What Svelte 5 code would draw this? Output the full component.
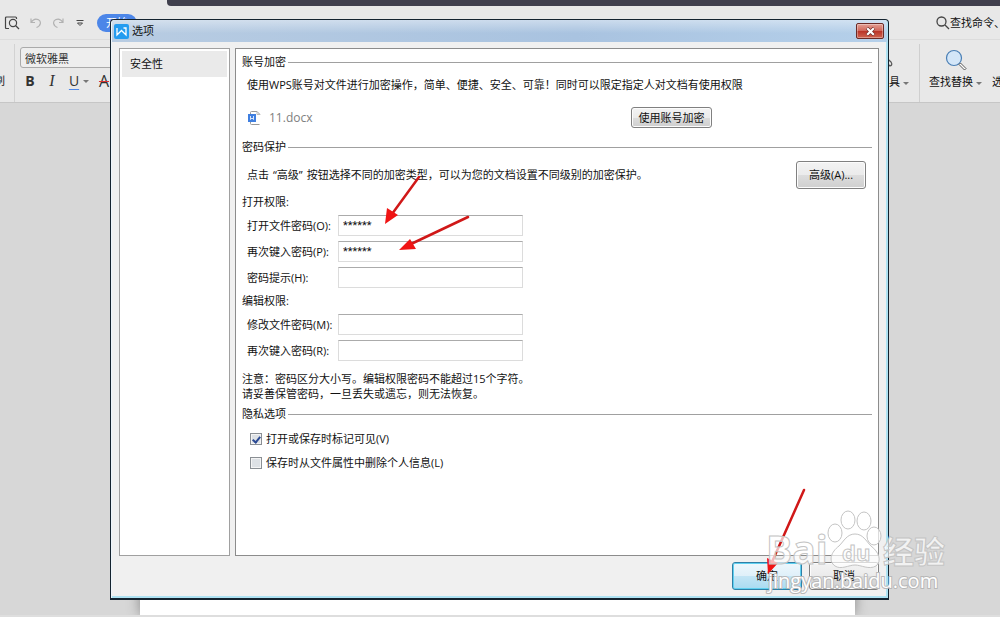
<script>
    let openFields = $state([
        { id: 'open-pwd', label: '打开文件密码(O):', value: '******' },
        { id: 'open-again', label: '再次键入密码(P):', value: '******' },
        { id: 'hint', label: '密码提示(H):', value: '' }
    ])
    let editFields = $state([
        { id: 'edit-pwd', label: '修改文件密码(M):', value: '' },
        { id: 'edit-again', label: '再次键入密码(R):', value: '' }
    ])
    let showMarkup = $state(true)
    let removeInfo = $state(false)
</script>

{#snippet fields(list)}
    <div class="fields">
        {#each list as field}
            <div class="field">
                <label for={field.id}>{field.label}</label>
                <input id={field.id} type="text" autocomplete="off" bind:value={field.value} />
            </div>
        {/each}
    </div>
{/snippet}

<div class="desktop">
    <div class="titlestrip"></div>
    <header class="tabs">
        <svg width="16" height="16" viewBox="0 0 16 16" fill="none" stroke="#444" stroke-width="1.2">
            <path d="M5 13.500H2.500Q1.500 13.500 1.500 12.500V3Q1.500 2 2.500 2H11.500Q12.500 2 12.500 3V4" />
            <circle cx="9" cy="8" r="3.600" />
            <path d="M11.500 10.500L15 14" />
        </svg>
        <svg width="12" height="12" viewBox="0 0 12 12" fill="none" stroke="#b2b2b2" stroke-width="1.200">
            <path d="M1 1.500V5.500H5M1.200 5.300C3 2.500 6 1.500 8.500 2.800C11.500 4.500 11 9 6.500 10.500" />
        </svg>
        <svg width="12" height="12" viewBox="0 0 12 12" fill="none" stroke="#b2b2b2" stroke-width="1.200">
            <path d="M11 1.500V5.500H7M10.800 5.300C9 2.500 6 1.500 3.500 2.800C.5 4.500 1 9 5.500 10.500" />
        </svg>
        <svg class="more" width="8" height="8" viewBox="0 0 8 8" fill="none" stroke="#444">
            <path d="M.5 1.500H7.500M1.500 4H6.500L4 6.500Z" />
        </svg>
        <button class="start">开始</button>
        <div class="search">
            <svg width="14" height="14" viewBox="0 0 14 14" fill="none" stroke="#444" stroke-width="1.300">
                <circle cx="5.500" cy="5.500" r="4.500" />
                <path d="M9 9L13 13" />
            </svg>
            <span>查找命令、搜索模板</span>
        </div>
    </header>
    <div class="ribbon">
        <div class="brush">刷</div>
        <div class="fontgroup">
            <input class="fontname" type="text" aria-label="字体" value="微软雅黑" />
            <div class="format">
                <button class="bold">B</button>
                <button class="italic">I</button>
                <button class="under">U</button>
                <i class="caret"></i>
                <button class="strike">A</button>
            </div>
        </div>
        <div class="tools">
            <div class="tool">
                <svg width="24" height="24" viewBox="0 0 24 24" fill="none" stroke="#555" stroke-width="1.200">
                    <path d="M9 4L20 14Q22 17 19 18L8 8" />
                </svg>
                <button>文字工具<i class="caret"></i></button>
            </div>
            <div class="tool find">
                <svg width="24" height="24" viewBox="0 0 24 24" fill="none">
                    <circle cx="10" cy="10" r="7.500" fill="#d3e6f8" stroke="#4a7fb5" stroke-width="1.200" />
                    <path d="M15 16.500L16.500 15L22 20.500L20.500 22Z" fill="#fff" stroke="#555" />
                </svg>
                <button>查找替换<i class="caret"></i></button>
            </div>
            <div class="tool"><button>选择</button></div>
        </div>
    </div>
    <div class="canvas"><div class="page"></div></div>
    <div class="status"></div>

    <section class="dialog" aria-label="选项">
        <div class="caption">
            <svg width="15" height="15" viewBox="0 0 15 15">
                <rect width="15" height="15" rx="2" fill="#259cf0" />
                <path d="M3 4V11L7.500 6.500L12 11V4H9.500" fill="none" stroke="#fff" stroke-width="1.300" />
            </svg>
            <span>选项</span>
            <button class="close" aria-label="关闭">
                <svg width="11" height="9" viewBox="0 0 11 9">
                    <path d="M2 1L9 8M9 1L2 8" stroke="#6b2a26" stroke-width="3.400" />
                    <path d="M2.200 1.200L8.800 7.800M8.800 1.200L2.200 7.800" stroke="#fff" stroke-width="2.200" />
                </svg>
            </button>
        </div>
        <div class="body">
            <nav class="side"><a href="#security">安全性</a></nav>
            <div class="panel" id="security">
                <h2>账号加密</h2>
                <p class="account">使用WPS账号对文件进行加密操作，简单、便捷、安全、可靠！同时可以限定指定人对文档有使用权限</p>
                <div class="file">
                    <svg width="14" height="14" viewBox="0 0 14 14">
                        <path d="M2.500 3V1.500Q2.500 .5 3.500 .5H9L12 3.500M2.500 11V12.500Q2.500 13.500 3.500 13.500H11.500" fill="none" stroke="#999" />
                        <path d="M9 .5V3.500H12" fill="none" stroke="#bbb" />
                        <rect y="3" width="8" height="8" fill="#3f7fe0" />
                        <path d="M2.500 5V8.500L4 7L5.500 8.500V5" fill="none" stroke="#fff" stroke-width=".8" />
                    </svg>
                    <span>11.docx</span>
                    <button class="btn small">使用账号加密</button>
                </div>
                <h2>密码保护</h2>
                <div class="protect">
                    <p>点击<span class="quote">“高级”</span>按钮选择不同的加密类型，可以为您的文档设置不同级别的加密保护。</p>
                    <button class="btn">高级(A)...</button>
                </div>
                <h3>打开权限:</h3>
                {@render fields(openFields)}
                <h3>编辑权限:</h3>
                {@render fields(editFields)}
                <p class="note">注意：密码区分大小写。编辑权限密码不能超过15个字符。<br />请妥善保管密码，一旦丢失或遗忘，则无法恢复。</p>
                <h2>隐私选项</h2>
                <div class="checks">
                    <label><input type="checkbox" bind:checked={showMarkup} />打开或保存时标记可见(V)</label>
                    <label><input type="checkbox" bind:checked={removeInfo} />保存时从文件属性中删除个人信息(L)</label>
                </div>
            </div>
        </div>
        <footer>
            <button class="btn ok">确定</button>
            <button class="btn">取消</button>
        </footer>
    </section>

    <!-- arrows and watermark drawn over the windows -->
    <svg class="marks" width="1000" height="617" viewBox="0 0 1000 617" aria-hidden="true">
        <g stroke="#d01818" stroke-width="2.500" fill="#f01414">
            <path d="M419 177L392 214M468 217L411 244M804 490L772 562" stroke-linecap="round" />
            <path stroke="none" d="M385 224L387 208L398 215ZM399 250L410 239L416 249ZM768 574L767 558L778 563Z" />
        </g>
        <g class="water">
            <text x="766" y="564" font-size="39" font-weight="700">Bai</text>
            <path d="M855 534C847 534 844 541 839 546C831 552 828 561 835 566C841 570 849 565 855 565C861 565 869 570 876 566C882 561 879 552 871 546C866 541 863 534 855 534Z" />
            <ellipse cx="835" cy="533" rx="7" ry="9" />
            <ellipse cx="848" cy="520" rx="7" ry="9" />
            <ellipse cx="864" cy="521" rx="7" ry="9" />
            <ellipse cx="874" cy="536" rx="7" ry="9" />
            <text x="842" y="561" font-size="22" font-weight="700">du</text>
            <text x="883" y="563" font-size="31" font-weight="700">经验</text>
            <text class="url" x="768" y="588" font-size="20">jingyan.baidu.com</text>
        </g>
    </svg>
</div>

<style>
    :global(body) {
        background: #d7d7d7;
    }
    .desktop {
        position: relative;
        display: flex;
        flex-direction: column;
        min-height: 100vh;
        overflow: hidden;
        background: #e8e8e8;
        font: 11px/16px "Open Sans", "Noto Sans CJK SC", sans-serif;
        color: #111;
    }
    button, input {
        font: inherit;
        color: inherit;
        margin: 0;
        padding: 0;
        box-sizing: border-box;
    }
    button {
        border: 0;
        background: none;
        white-space: nowrap;
    }
    h2, h3, p {
        margin: 0;
        font-size: 11px;
        font-weight: 400;
    }
    .titlestrip {
        height: 6px;
        margin-left: 167px;
        border-radius: 0 0 0 4px;
        background: #403f4d;
    }
    .tabs {
        display: flex;
        align-items: center;
        gap: 10px;
        height: 34px;
        padding-left: 4px;
        border-bottom: 1px solid #dcdcdc;
        box-sizing: border-box;
    }
    .more {
        margin-left: 2px;
    }
    .start {
        width: 40px;
        height: 18px;
        margin-left: 3px;
        padding-left: 9px;
        border-radius: 9px;
        background: #4c86e8;
        color: #fff;
        text-align: left;
    }
    .search {
        display: flex;
        align-items: center;
        width: 64px;
        margin-left: auto;
        overflow: hidden;
        white-space: nowrap;
    }
    .search svg {
        flex: none;
    }
    .ribbon {
        display: flex;
        height: 63px;
        padding-top: 4px;
        border-bottom: 1px solid #c6c6c6;
        box-sizing: border-box;
    }
    .brush {
        display: flex;
        align-items: center;
        justify-content: flex-end;
        width: 15px;
        padding: 16px 9px 0 0;
        border-right: 1px solid #d2d2d2;
        box-sizing: border-box;
    }
    .fontgroup {
        width: 140px;
        padding: 3px 0 0 5px;
    }
    .fontname {
        width: 100%;
        height: 21px;
        padding: 0 4px;
        border: 1px solid #aaa;
        border-radius: 3px;
        background: #eee;
        color: #333;
    }
    .format {
        display: flex;
        align-items: center;
        gap: 5px;
        padding: 4px 0 0 3px;
        font-size: 14px;
        color: #333;
    }
    .format button {
        width: 14px;
        height: 18px;
    }
    .format .bold {
        font-weight: 700;
    }
    .format .italic {
        margin: 0 3px;
        font: italic 16px/18px "Liberation Serif", serif;
    }
    .format .under {
        text-decoration: underline #4c86e8;
        text-underline-offset: 3px;
    }
    .format .strike {
        font-size: 16px;
        text-decoration: line-through #d33;
    }
    .caret {
        display: inline-block;
        border: 3px solid transparent;
        border-top-color: #777;
        border-bottom: 0;
        margin-left: 3px;
        vertical-align: middle;
    }
    .format .caret {
        margin: 0 3px 0 -3px;
    }
    .tools {
        display: flex;
        width: 140px;
        margin-left: auto;
        justify-content: flex-end;
        overflow: hidden;
    }
    .tool {
        display: flex;
        flex: none;
        flex-direction: column;
        align-items: center;
        justify-content: flex-end;
        gap: 2px;
        padding: 0 10px 12px;
    }
    .find {
        padding: 0 10px 12px 9px;
        border-left: 1px solid #cfcfcf;
    }
    .tool:last-child {
        width: 8px;
        align-items: flex-start;
        padding: 0 0 12px;
    }
    .canvas {
        flex: 1;
        display: flex;
        padding: 0 145px 0 140px;
        background: #d7d7d7;
    }
    .page {
        flex: 1;
        margin-top: 20px;
        background: #fff;
        box-shadow: 0 0 12px #8a8a8a;
    }
    .status {
        height: 2px;
        background: #dedede;
        position: relative;
    }
    .dialog {
        position: absolute;
        top: 19px;
        left: 110px;
        right: 111px;
        box-sizing: border-box;
        padding: 0 9px 8px 8px;
        border: 1px solid #14232f;
        border-bottom-width: 2px;
        border-radius: 4px 4px 0 0;
        background: #f0f0f0;
        box-shadow: inset 1px 1px #edf5fb, inset -2px -2px #aee2f2;
    }
    .caption {
        display: flex;
        align-items: center;
        gap: 3px;
        height: 22px;
        margin: 0 -8px 6px -7px;
        padding: 0 3px 0 2px;
        border-radius: 3px 3px 0 0;
        background: linear-gradient(#ffffff66, #ffffff00 60%), linear-gradient(90deg, #b8cce2, #a9c3e0 60%, #b5d0ea);
    }
    .close {
        display: flex;
        align-items: center;
        justify-content: center;
        width: 28px;
        height: 16px;
        margin-left: auto;
        border: 1px solid #6b2a26;
        border-radius: 2px;
        background: linear-gradient(#e3a095, #d0665a 48%, #b93226 50%, #cf6450);
        box-shadow: inset 0 0 0 1px #ffffff55;
    }
    .body {
        display: flex;
        gap: 5px;
    }
    .side {
        width: 111px;
        flex: none;
        padding: 2px;
        border: 1px solid #a0a0a0;
        background: #fff;
        box-sizing: border-box;
    }
    .side a {
        display: block;
        padding: 5px 8px;
        background: #eaeaea;
        color: inherit;
        text-decoration: none;
    }
    .panel {
        flex: 1;
        min-width: 0;
        padding: 5px 6px 84px;
        border: 1px solid #8c8c8c;
        background: #fff;
    }
    h2 {
        display: flex;
        align-items: center;
        gap: 2px;
    }
    h2::after {
        content: "";
        flex: 1;
        height: 1px;
        background: #a0a0a0;
    }
    .account {
        padding: 7px 0 14px 5px;
        white-space: nowrap;
    }
    .file {
        display: flex;
        align-items: center;
        gap: 7px;
        margin-bottom: 11px;
        padding: 0 160px 0 6px;
        font-size: 12px;
        color: #808080;
    }
    .btn {
        width: 70px;
        height: 28px;
        border: 1px solid #808080;
        border-radius: 3px;
        background: linear-gradient(#f3f3f3, #ebebeb 50%, #dddddd 50%, #cfcfcf);
        box-shadow: inset 0 0 0 1px #fcfcfc;
        color: #111;
        font-size: 11px;
    }
    .small {
        width: 81px;
        height: 21px;
        margin-left: auto;
    }
    .protect {
        display: flex;
        align-items: center;
        justify-content: space-between;
        margin: 6px 0 5px;
        padding: 0 6px 0 5px;
    }
    .quote {
        padding: 0 4px;
    }
    .fields {
        display: grid;
        gap: 5px;
        padding: 5px 0 5px 5px;
    }
    .field {
        display: flex;
        align-items: center;
    }
    .field label {
        width: 91px;
    }
    .field input {
        width: 185px;
        height: 21px;
        padding: 0 4px;
        border: 1px solid #dcdcdc;
        border-top-color: #ababab;
        background: #fff;
        font-family: Roboto, "Noto Sans CJK SC", sans-serif;
    }
    .note {
        padding: 5px 0;
        line-height: 15px;
    }
    .checks {
        display: grid;
        gap: 8px;
        padding: 9px 0 0 8px;
    }
    .checks label {
        display: flex;
        align-items: center;
        gap: 4px;
    }
    .checks input {
        display: grid;
        place-items: center;
        appearance: none;
        width: 12px;
        height: 12px;
        border: 1px solid #8a8f94;
        background: #dde1e5;
        box-shadow: inset 0 0 0 1px #f4f4f4;
    }
    .checks input:checked::after {
        content: "";
        width: 3px;
        height: 6px;
        border: solid #2b4a94;
        border-width: 0 2px 2px 0;
        transform: rotate(40deg);
    }
    footer {
        display: flex;
        justify-content: flex-end;
        gap: 7px;
        padding-top: 6px;
    }
    .ok {
        border-color: #2f7fa6;
        background: linear-gradient(#eef7fc, #dff0f9 50%, #c3e5f5 50%, #a9dbf1);
        box-shadow: inset 0 0 0 1px #5fd0f0;
    }
    .marks {
        position: absolute;
        top: 0;
        left: 0;
        pointer-events: none;
    }
    .water {
        fill: #ffffffb0;
        stroke: #c4c4c4;
        stroke-width: 1;
        font-family: "Open Sans", "Noto Sans CJK SC", sans-serif;
    }
    .water .url {
        fill: #fff;
        stroke: #b8b8b8;
        stroke-width: 2;
        paint-order: stroke;
    }
</style>
